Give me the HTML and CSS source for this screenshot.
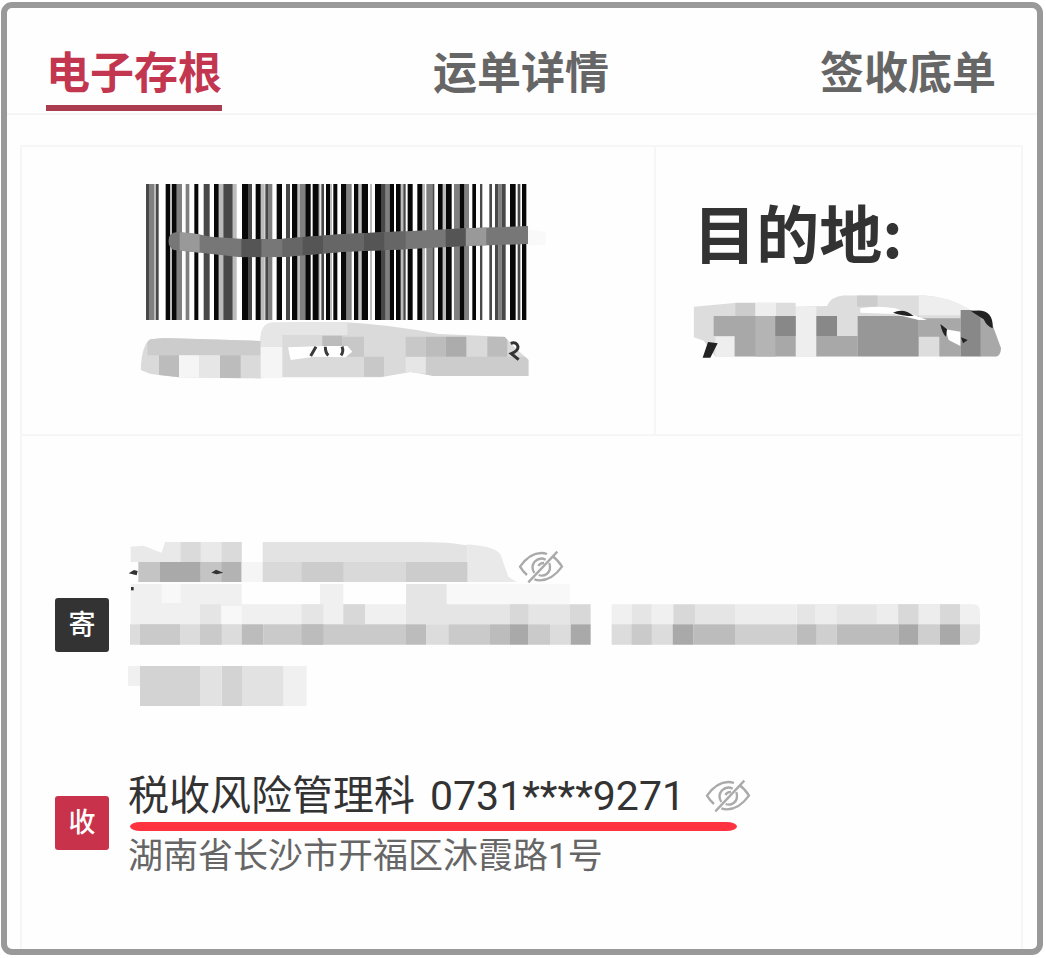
FILE: index.html
```html
<!DOCTYPE html>
<html lang="zh-CN">
<head>
  <meta charset="UTF-8">
  <meta name="viewport" content="width=device-width, initial-scale=1.0">
  <title>电子存根</title>
  <link rel="stylesheet" href="styles.css">
</head>
<body>

  <div class="container">

    <!-- Tabs -->
    <nav class="tabs">
      <button type="button" class="tab active">电子存根</button>
      <button type="button" class="tab">运单详情</button>
      <button type="button" class="tab">签收底单</button>
    </nav>

    <main class="stub">

      <div class="stub-top">
        <!-- Barcode -->
        <div class="barcode-cell">
          <svg class="barcode" viewBox="-18 30 1260 600" aria-hidden="true">
            <defs>
              <clipPath id="strike">
                <path d="M103 212Q104 188 130 186L190 192L230 200L330 207L440 207L500 202L630 192L815 184L995 175L1182 168V222L995 228L815 238L630 245L440 262L320 262L200 248L120 240Q103 232 103 212z"/>
              </clipPath>
              <clipPath id="numberShape">
                <path d="M20 600Q24 520 50 508L90 504L380 513Q378 465 410 458L615 455Q760 462 915 492L1112 500L1140 530L1184 570V618H900L830 606L740 622H390L380 626L135 622L50 612z"/>
              </clipPath>
            </defs>
            <g transform="translate(36 42)">
              <path fill="#bbb" d="M24 0h6v408h-6zM72 0h6v408h-6zM218 0h14v408h-14zM260 0h12v408h-12zM344 0h12v408h-12zM454 0h8v408h-8zM518 0h5v408h-5zM552 0h6v408h-6zM637 0h10v408h-10zM672 0h6v408h-6zM764 0h8v408h-8zM829 0h8v408h-8zM890 0h10v408h-10z"/>
              <path fill="#808080" d="M9 0h15v408h-15zM92 0h16v408h-16zM119 0h11v408h-11zM366 0h13v408h-13zM462 0h16v408h-16zM601 0h16v408h-16zM719 0h12v408h-12zM841 0h18v408h-18zM924 0h17v408h-17zM955 0h14v408h-14zM1057 0h10v408h-10z"/>
              <path fill="#484848" d="M0 0h9v408h-9zM30 0h8v408h-8zM173 0h18v408h-18zM232 0h28v408h-28zM306 0h12v408h-12zM358 0h8v408h-8zM420 0h12v408h-12zM526 0h8v408h-8zM705 0h14v408h-14zM772 0h7v408h-7zM859 0h6v408h-6zM1002 0h7v408h-7zM1030 0h8v408h-8zM1047 0h10v408h-10zM1067 0h12v408h-12zM1115 0h8v408h-8z"/>
              <path fill="#080808" d="M59 0h13v408h-13zM78 0h14v408h-14zM145 0h12v408h-12zM204 0h14v408h-14zM288 0h18v408h-18zM329 0h15v408h-15zM392 0h16v408h-16zM438 0h16v408h-16zM478 0h16v408h-16zM500 0h18v408h-18zM540 0h12v408h-12zM562 0h12v408h-12zM585 0h16v408h-16zM624 0h13v408h-13zM647 0h19v408h-19zM687 0h18v408h-18zM731 0h13v408h-13zM750 0h14v408h-14zM785 0h15v408h-15zM814 0h15v408h-15zM876 0h14v408h-14zM900 0h17v408h-17zM941 0h14v408h-14zM979 0h11v408h-11zM1092 0h17v408h-17zM1128 0h13v408h-13z"/>
            </g>
            <path fill="#f9f9f9" d="M1182 178L1235 186V224L1182 226z"/>
            <g clip-path="url(#strike)">
              <path fill="#777" d="M100 160h1100v120H100z"/>
              <path fill="#999" d="M137 160h60v120h-60zM995 160h62v120h-62z"/>
              <path fill="#555" d="M322 160h60v120h-60zM505 160h62v120h-62zM690 160h62v120h-62zM935 160h60v120h-60z"/>
              <path fill="#666" d="M445 160h60v120h-60zM567 160h123v120H567zM752 160h63v120h-63z"/>
            </g>
            <g clip-path="url(#numberShape)">
              <path fill="#dadada" d="M0 450h1200v180H0z"/>
              <path fill="#ccc" d="M40 500h340v56H40zM875 560h310v60H875z"/>
              <path fill="#bcbcbc" d="M75 556h60v70H75zM258 556h62v70h-62zM565 497h60v33h-60zM875 500h60v60h-60zM1060 500h60v60h-60z"/>
              <path fill="#f5f5f5" d="M135 556h60v70h-60zM380 530h65v96h-65z"/>
              <path fill="#e6e6e6" d="M195 556h63v70h-63zM380 455h260v40H445v35h-65zM815 560h60v50h-60z"/>
              <path fill="#c8c8c8" d="M625 500h65v60h-65zM815 500h60v60h-60zM690 560h60v60h-60z"/>
              <path fill="#acacac" d="M935 500h62v60h-62z"/>
              <path fill="#fff" d="M462 532L570 528H640L655 545L635 562L540 560L470 570z"/>
            </g>
            <path fill="none" stroke="#3a3a3a" stroke-width="9" d="M546 530L530 558M574 530Q574 548 583 556M624 530Q630 545 621 556"/>
            <path fill="none" stroke="#333" stroke-width="9" d="M1130 520Q1148 514 1152 530Q1153 543 1132 551L1154 569"/>
          </svg>
        </div>

        <!-- Destination -->
        <div class="destination">
          <h1>目的地:</h1>
          <svg class="destination-mask" viewBox="158 459 945 210" aria-hidden="true">
            <defs>
              <clipPath id="destinationShape">
                <path d="M160 500L290 488H466V500L560 498Q572 470 610 466H850Q930 472 990 510Q1050 515 1060 565L1082 625Q1080 648 1068 650H225L190 602L160 592z"/>
              </clipPath>
            </defs>
            <g clip-path="url(#destinationShape)">
              <path fill="#ddd" d="M150 455h945v210H150z"/>
              <path fill="#ccc" d="M285 488h60v40h-60zM650 466h62v34h-62z"/>
              <path fill="#eee" d="M345 488h62v40h-62zM466 500h62v150h-62zM835 466h160v60H835zM225 590h58v60h-58z"/>
              <path fill="#a8a8a8" d="M220 528h246v122H283v-62h-63zM528 588h124v62H528zM835 535h126v55H835zM897 588h64v62h-64zM1020 528h65v122h-65z"/>
              <path fill="#b4b4b4" d="M345 528h60v122h-60z"/>
              <path fill="#888" d="M405 528h61v60h-61zM528 528h62v60h-62zM961 510h60v140h-60z"/>
              <path fill="#979797" d="M652 528h183v122H652z"/>
              <path fill="#fff" d="M660 505Q710 495 765 505L835 530L860 540H835L760 522L660 518zM915 568L960 575V618L925 600z"/>
            </g>
            <path fill="#222" d="M203 606L232 610L210 653H187zM758 518Q790 503 820 528Q785 528 758 518zM900 552L920 568L917 590Q905 580 900 552zM962 592L982 600L968 610zM992 514Q1060 500 1057 565Q1040 560 1030 538Z"/>
          </svg>
        </div>
      </div>

      <!-- Addresses -->
      <div class="addresses">
        <section class="party">
          <span class="badge badge-send">寄</span>
          <div class="party-info">
            <div class="party-name masked">
              <svg class="name-mask" viewBox="264 30 1170 132" aria-hidden="true">
                <path fill="#e9e9e9" d="M272 50L310 47L365 68L375 36H605V96H272zM1282 43Q1370 50 1382 75L1405 140L1430 156H1282z"/>
                <path fill="#dadada" d="M422 36h60v60h-60zM545 36h60v60h-60z"/>
                <path fill="#e3e3e3" d="M668 36H1100Q1220 34 1282 46V96H668z"/>
                <path fill="#c4c4c4" d="M295 96h65v60h-65zM482 96h64v60h-64z"/>
                <path fill="#a9a9a9" d="M360 96h122v60H360z"/>
                <path fill="#b3b3b3" d="M545 96h60v60h-60z"/>
                <path fill="#f5f5f5" d="M605 96h63v60h-63z"/>
                <path fill="#d9d9d9" d="M668 96h614v60H668z"/>
                <path fill="#ccc" d="M785 96h125v60H785zM1098 96h184v60h-184z"/>
                <path fill="#333" d="M266 130L282 120L293 123L290 136zM514 128L528 119L550 128L530 133z"/>
              </svg>
              <button type="button" class="eye" aria-label="显示寄件人信息">
                <svg viewBox="0 0 138 102" aria-hidden="true">
                  <path d="M103 18Q119 29 132 50Q102 91 66 91Q57 91 49 88M27 75Q15 65 6 50Q35 9 70 9Q79 9 87 12"/>
                  <path d="M83 29Q66 20 51 34Q37 50 49 69M94 39Q101 60 86 72Q75 80 62 75M78 39Q67 38 61 48"/>
                  <path d="M118 5L31 97"/>
                </svg>
              </button>
            </div>
            <svg class="address-mask" viewBox="264 159 2565 375" aria-hidden="true">
              <path fill="#f0f0f0" d="M272 156h333v124H272zM605 220h493v60H605zM840 156h70v64h-70zM2760 220h40q20 0 20 25v35h-60zM1715 220h60v60h-60zM1835 220h65v60h-65z"/>
              <path fill="#f8f8f8" d="M365 156h57v60h-57zM545 225h60v55h-60zM1220 156h370v64h-370z"/>
              <path fill="#e5e5e5" d="M480 220h62v60h-62zM785 220h65v60h-65zM1098 156h122v124h-122zM1220 220h370v60h-370zM1775 220h60v60h-60zM1965 220h120v60h-120zM2270 220h490v60h-490z"/>
              <path fill="#ededed" d="M2085 220h185v60h-185zM2325 220h65v60h-65zM2510 220h65v60h-65zM2635 220h65v60h-65z"/>
              <path fill="#d8d8d8" d="M910 220h65v60h-65zM1410 220h55v60h-55zM1590 220h62v60h-62zM1900 220h65v60h-65zM2575 220h60v60h-60zM2700 220h60v60h-60z"/>
              <path fill="#dcdcdc" d="M270 280h335v61H270zM1158 280h67v61h-67zM1530 280h62v61h-62zM1715 280h183v61h-183zM2760 280h60v40q0 21-20 21h-40z"/>
              <path fill="#cacaca" d="M300 280h120v61H300zM480 280h65v61h-65zM670 280h428v61H670zM1225 280h125v61h-125zM1465 280h65v61h-65zM1775 280h60v61h-60z"/>
              <path fill="#cfcfcf" d="M2085 280h185v61h-185zM2330 280h60v61h-60zM2635 280h65v61h-65z"/>
              <path fill="#bcbcbc" d="M605 280h65v61h-65zM785 280h65v61h-65zM1098 280h60v61h-60zM1350 280h60v61h-60zM1960 280h125v61h-125zM2270 280h60v61h-60zM2390 280h185v61h-185z"/>
              <path fill="#a9a9a9" d="M1410 280h55v61h-55zM1592 280h60v61h-60zM1898 280h62v61h-62zM2575 280h60v61h-60zM2700 280h60v61h-60z"/>
              <path fill="#f0f0f0" d="M262 405h38v60h-38zM730 405h70v120h-70z"/>
              <path fill="#d3d3d3" d="M300 405h180v120H300zM545 405h63v120h-63z"/>
              <path fill="#e2e2e2" d="M480 405h65v120h-65zM608 405h122v120H608z"/>
              <path fill="#333" d="M273 168h8v10h-8z"/>
            </svg>
          </div>
        </section>

        <section class="party">
          <span class="badge badge-receive">收</span>
          <div class="party-info">
            <div class="marked">
              <div class="party-name">
                <span>税收风险管理科</span>
                <span class="phone">0731****9271</span>
                <button type="button" class="eye" aria-label="显示收件人信息">
                  <svg viewBox="0 0 138 102" aria-hidden="true">
                    <path d="M103 18Q119 29 132 50Q102 91 66 91Q57 91 49 88M27 75Q15 65 6 50Q35 9 70 9Q79 9 87 12"/>
                    <path d="M83 29Q66 20 51 34Q37 50 49 69M94 39Q101 60 86 72Q75 80 62 75M78 39Q67 38 61 48"/>
                    <path d="M118 5L31 97"/>
                  </svg>
                </button>
              </div>
              <div class="red-line"></div>
            </div>
            <p class="address">湖南省长沙市开福区沐霞路1号</p>
          </div>
        </section>
      </div>

    </main>
  </div>

</body>
</html>
```

FILE: styles.css
```css
* {
  box-sizing: border-box;
}

body {
  font-family: Roboto, "Noto Sans CJK SC", sans-serif;
  margin: 0;
  padding: 2px 3px 3px 1px;
  background-color: #fff;
  color: #333;
}

button {
  font-family: inherit;
  padding: 0;
  border: none;
  background: none;
  cursor: pointer;
}

svg {
  display: block;
}

.container {
  display: flex;
  flex-direction: column;
  min-height: calc(100vh - 5px);
  border: 6px solid #999;
  border-radius: 11px;
  background-color: #fefefe;
}

.tabs {
  display: flex;
  justify-content: space-between;
  padding: 36px 41px 2px 39px;
  border-bottom: 2px solid #f5f5f5;
}

.tab {
  color: #666;
  font-size: 44px;
  font-weight: 700;
  line-height: 61px;
  border-bottom: 6px solid transparent;
}

.tab.active {
  color: #c23650;
  border-bottom-color: #aa3c50;
}

.stub {
  flex: 1;
  margin: 30px 14px 0 13px;
  border: 2px solid #f6f6f6;
  border-bottom: none;
}

.stub-top {
  display: grid;
  grid-template-columns: 633fr 367fr;
  border-bottom: 2px solid #f6f6f6;
}

.barcode-cell {
  display: flex;
  justify-content: center;
  padding: 33px 0 54px;
}

.barcode {
  width: 420px;
  height: 200px;
}

.destination {
  padding: 40px 0 0 37px;
  border-left: 2px solid #f6f6f6;
}

.destination h1 {
  margin: 0 0 18px;
  font-family: "Noto Sans CJK SC", sans-serif;
  font-size: 63px;
  font-weight: 700;
  line-height: 88px;
}

.destination-mask {
  width: 315px;
  height: 70px;
}

.addresses {
  display: flex;
  flex-direction: column;
  gap: 57px;
  padding: 104px 33px 60px;
}

.party {
  display: flex;
  align-items: center;
  gap: 19px;
}

.badge {
  width: 54px;
  flex-shrink: 0;
  color: #fff;
  font-size: 27px;
  font-weight: 500;
  line-height: 54px;
  text-align: center;
  border-radius: 3px;
}

.badge-send {
  background-color: #333;
}

.badge-receive {
  background-color: #c8324b;
}

.party-name {
  display: flex;
  align-items: center;
  font-size: 41px;
}

.party-name.masked {
  align-items: flex-end;
}

.name-mask {
  width: 390px;
  height: 44px;
}

.address-mask {
  width: 855px;
  height: 125px;
}

.eye svg {
  width: 46px;
  height: 34px;
  fill: none;
  stroke: #aaa;
  stroke-width: 7;
}

.marked {
  width: fit-content;
  padding-top: 4px;
  line-height: 52px;
}

.phone {
  margin: 0 20px 0 15px;
}

.red-line {
  height: 9px;
  margin: 0 14px 0 2px;
  background-color: #ff3340;
  border-radius: 12px / 5px;
}

.address {
  margin: 0;
  padding-top: 4px;
  color: #666;
  font-size: 35px;
  line-height: 44px;
}
```
